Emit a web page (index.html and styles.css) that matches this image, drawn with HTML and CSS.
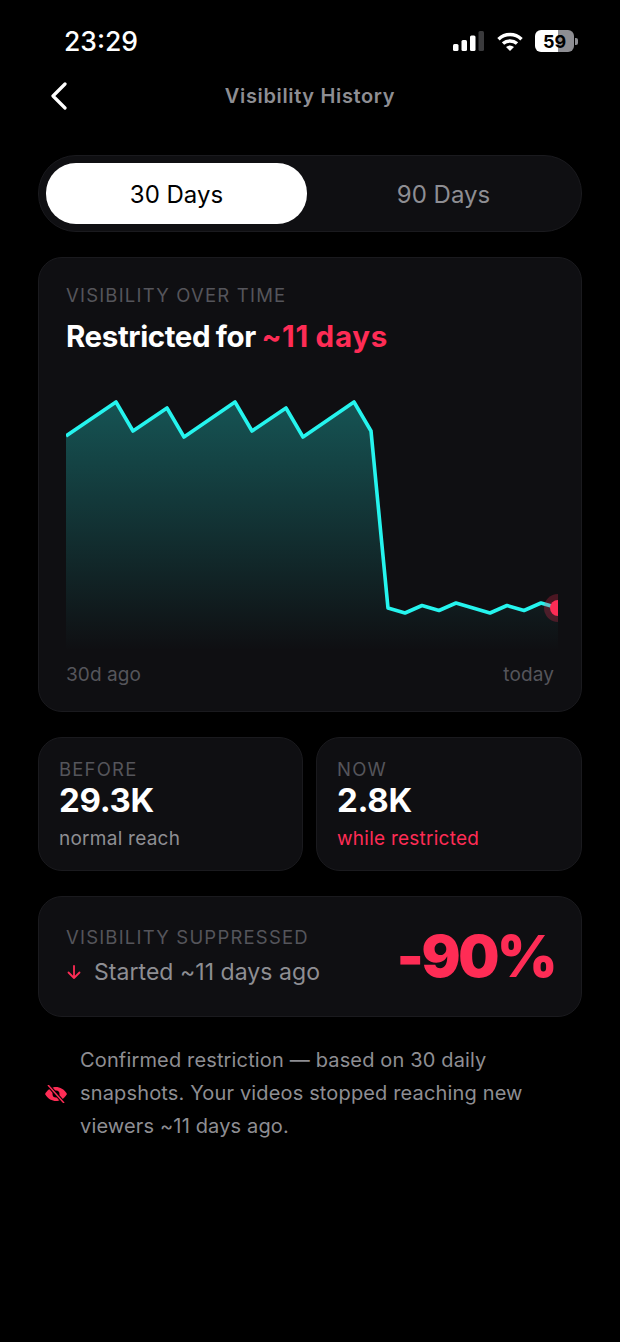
FILE: index.html
```html
<!DOCTYPE html>
<html lang="en">

<head>
  <meta charset="UTF-8">
  <meta name="viewport" content="width=device-width, initial-scale=1.0">
  <title>Visibility History</title>
  <link rel="stylesheet" href="styles.css">
</head>

<body>
  <div class="status">
    <span class="status__time">23:29</span>
    <div class="status__icons">
      <svg class="status__signal" width="31" height="20" viewBox="0 0 31 20">
        <rect x="0" y="13" width="5.5" height="7" rx="1.5" fill="#fff" />
        <rect x="8.5" y="9" width="5.5" height="11" rx="1.5" fill="#fff" />
        <rect x="17" y="4.500" width="5.500" height="15.500" rx="1.500" fill="#fff" />
        <rect x="25.500" y="0" width="5.500" height="20" rx="1.500" fill="#3a3a3c" />
      </svg>
      <svg class="status__wifi" width="26" height="19" viewBox="0 0 26 19">
        <path d="M1.500 7.200C8 1 18 1 24.500 7.200" fill="none" stroke="#fff" stroke-width="3.500" />
        <path d="M6 11.500C10 8 16 8 20 11.500" fill="none" stroke="#fff" stroke-width="3.500" />
        <path d="M9 15L13 19 17 15C14.500 13 11.500 13 9 15Z" fill="#fff" />
      </svg>
      <div class="battery">
        <div class="battery__body"><span class="battery__num">59</span></div>
        <div class="battery__nub"></div>
      </div>
    </div>
  </div>

  <div class="nav">
    <svg class="nav__back" width="18" height="28" viewBox="0 0 18 28">
      <path d="M15 2L3 14 15 26" fill="none" stroke="#fff" stroke-width="3.200" stroke-linecap="round" stroke-linejoin="round" />
    </svg>
    <h1 class="nav__title">Visibility History</h1>
  </div>

  <div class="tabs">
    <div class="tabs__item tabs__item--on">30 Days</div>
    <div class="tabs__item">90 Days</div>
  </div>

  <div class="card chart-card">
    <div class="label">VISIBILITY OVER TIME</div>
    <div class="chart-card__title">Restricted for <span class="red chart-card__days">~11 days</span></div>
    <svg class="chart" width="492" height="270" viewBox="0 0 492 270">
      <defs>
        <linearGradient id="fade" x1="0" y1="0" x2="0" y2="1">
          <stop offset="0" stop-color="#25f4ee" stop-opacity="0.3" />
          <stop offset="1" stop-color="#25f4ee" stop-opacity="0" />
        </linearGradient>
      </defs>
      <path fill="url(#fade)" d="M0 55L50 21 67 50 101 27 118 56 169 21 186 50 220 27 237 56 288 21 305 50 322 227 339 232 356 224.500 373 229.500 390 222 424 232 441 224.500 458 229.500 475 222 492 227V270H0Z" />
      <polyline fill="none" stroke="#25f4ee" stroke-width="3.600" stroke-linejoin="round" points="0,55 50,21 67,50 101,27 118,56 169,21 186,50 220,27 237,56 288,21 305,50 322,227 339,232 356,224.500 373,229.500 390,222 424,232 441,224.500 458,229.500 475,222 492,227" />
      <circle cx="492" cy="227" r="14" fill="#fe2c55" fill-opacity="0.25" />
      <circle cx="492" cy="227" r="8" fill="#fe2c55" />
    </svg>
    <div class="chart-card__axis">
      <span>30d ago</span>
      <span>today</span>
    </div>
  </div>

  <div class="stats">
    <div class="card stat">
      <div class="label">BEFORE</div>
      <div class="stat__num">29.3K</div>
      <div class="stat__note">normal reach</div>
    </div>
    <div class="card stat">
      <div class="label">NOW</div>
      <div class="stat__num">2.8K</div>
      <div class="stat__note red">while restricted</div>
    </div>
  </div>

  <div class="card drop">
    <div>
      <div class="label">VISIBILITY SUPPRESSED</div>
      <div class="drop__since">
        <svg width="16" height="16" viewBox="0 0 16 16">
          <path d="M8 2V14M2.500 8.500L8 14 13.500 8.500" fill="none" stroke="#fe2c55" stroke-width="1.800" stroke-linecap="round" stroke-linejoin="round" />
        </svg>
        Started ~11 days ago
      </div>
    </div>
    <div class="drop__num">-90%</div>
  </div>

  <div class="note">
    <svg class="note__icon" width="22" height="18" viewBox="0 0 22 18">
      <path d="M0 9C3 4 7 2 11 2s8 2 11 7c-3 5-7 7-11 7S3 14 0 9Z" fill="#fe2c55" />
      <circle cx="11" cy="9" r="3.500" fill="#000" />
      <path d="M3 0L19 18" stroke="#000" stroke-width="3.500" />
      <path d="M3 0L19 18" stroke="#fe2c55" stroke-width="1.500" />
    </svg>
    <p class="note__text">Confirmed restriction — based on 30 daily snapshots. Your videos stopped reaching new viewers ~11 days ago.</p>
  </div>
</body>

</html>
```

FILE: styles.css
```css
* {
  box-sizing: border-box;
}

html,
body {
  margin: 0;
  background: #000;
}

body {
  padding: 0 38px;
  height: 1342px;
  overflow: hidden;
  font-family: Inter, "Liberation Sans", sans-serif;
  color: #fff;
}

.red {
  color: #fe2c55;
}

/* status bar */
.status {
  display: flex;
  justify-content: space-between;
  align-items: center;
  height: 82px;
  margin: 0 -38px;
  padding: 0 42px 0 64px;
}

.status__time {
  font-size: 26.5px;
  font-weight: 500;
}

.status__icons {
  display: flex;
  align-items: center;
}

.status__signal {
  margin-right: 13px;
}

.status__wifi {
  margin-right: 12px;
}

.battery {
  display: flex;
  align-items: center;
}

.battery__body {
  display: flex;
  align-items: center;
  justify-content: center;
  width: 39px;
  height: 22px;
  border-radius: 6px;
  background: linear-gradient(90deg, #fff 0 59%, #8e8e93 59% 100%);
}

.battery__num {
  font-size: 18px;
  font-weight: 700;
  color: #000;
}

.battery__nub {
  width: 3px;
  height: 7px;
  margin-left: 1px;
  border-radius: 0 2px 2px 0;
  background: #8e8e93;
}

/* nav */
.nav {
  position: relative;
  display: flex;
  justify-content: center;
  align-items: center;
  height: 28px;
}

.nav__back {
  position: absolute;
  left: 12px;
  top: 0;
}

.nav__title {
  margin: 0;
  font-size: 20px;
  font-weight: 600;
  letter-spacing: 0.65px;
  color: #8e8e93;
}

/* tabs */
.tabs {
  display: flex;
  gap: 6px;
  height: 77px;
  margin-top: 45px;
  padding: 7px;
  border: 1px solid #1a1a1e;
  border-radius: 38px;
  background: #0f0f12;
}

.tabs__item {
  display: flex;
  flex: 1;
  justify-content: center;
  align-items: center;
  padding-top: 2px;
  border-radius: 30px;
  font-size: 24px;
  color: #8e8e93;
}

.tabs__item--on {
  background: #fff;
  color: #000;
}

/* cards */
.card {
  border: 1px solid #1a1a1e;
  border-radius: 24px;
  background: #0f0f12;
}

.label {
  font-size: 18.5px;
  line-height: 22px;
  letter-spacing: 1.2px;
  color: #55555b;
}

.chart-card {
  height: 455px;
  margin-top: 25px;
  padding: 26px 27px 0 27px;
}

.chart-card__title {
  margin-top: 10px;
  font-size: 29.5px;
  line-height: 40px;
  font-weight: 700;
  letter-spacing: -0.4px;
  word-spacing: -1px;
}

.chart-card__days {
  letter-spacing: 0.7px;
}

.chart {
  display: block;
  margin-top: 25px;
}

.chart-card__axis {
  display: flex;
  justify-content: space-between;
  margin-top: 13px;
  font-size: 19px;
  line-height: 22px;
  letter-spacing: 0.1px;
  color: #55555b;
}

.stats {
  display: grid;
  grid-template-columns: 265px 1fr;
  gap: 13px;
  margin-top: 25px;
}

.stat {
  height: 134px;
  padding: 20px 20px 0;
}

.stat__num {
  font-size: 33px;
  line-height: 40px;
  font-weight: 700;
  letter-spacing: -0.3px;
}

.stat__note {
  margin-top: 8px;
  font-size: 19px;
  line-height: 22px;
  letter-spacing: 0.25px;
  color: #8e8e93;
}

.stat__note.red {
  color: #fe2c55;
}

.drop {
  display: flex;
  justify-content: space-between;
  align-items: center;
  height: 121px;
  margin-top: 25px;
  padding: 0 26px 2px 27px;
}

.drop__since {
  display: flex;
  align-items: center;
  gap: 12px;
  margin-top: 10px;
  font-size: 23px;
  line-height: 28px;
  letter-spacing: 0.05px;
  color: #8e8e93;
}

.drop__num {
  font-size: 58px;
  font-weight: 900;
  letter-spacing: -2.5px;
  color: #fe2c55;
}

.note {
  display: flex;
  align-items: center;
  gap: 13px;
  margin-top: 27px;
  padding: 0 50px 0 7px;
}

.note__icon {
  flex-shrink: 0;
}

.note__text {
  margin: 0;
  font-size: 20px;
  line-height: 33px;
  letter-spacing: 0.15px;
  color: #8e8e93;
}
```
